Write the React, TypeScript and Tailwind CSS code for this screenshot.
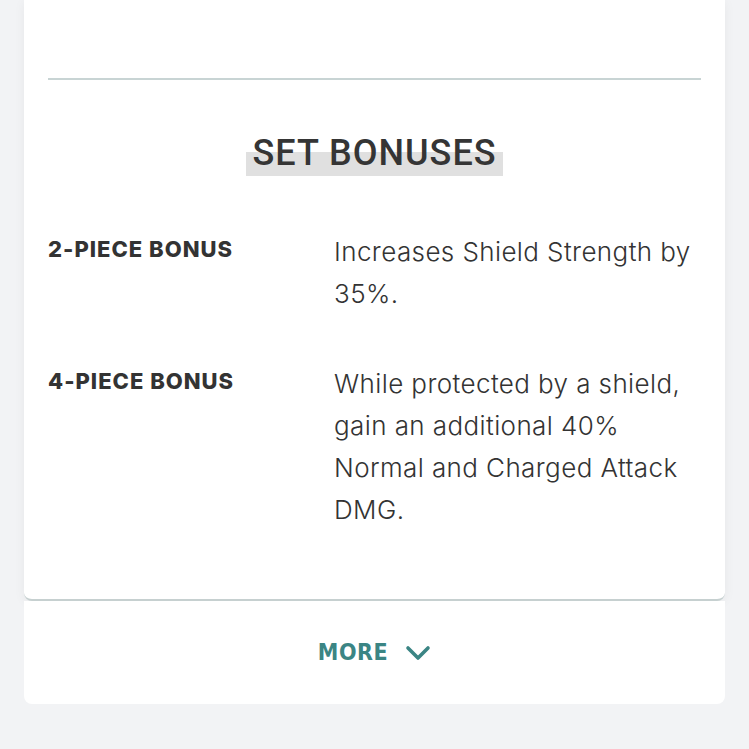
import React from "react";

const bonuses = [
  { label: "2-PIECE BONUS", text: "Increases Shield Strength by 35%." },
  {
    label: "4-PIECE BONUS",
    text: "While protected by a shield, gain an additional 40% Normal and Charged Attack DMG.",
  },
];

function ChevronDown() {
  return (
    <svg width="26" height="18" viewBox="0 0 26 18" fill="none" className="ml-[17px]">
      <path d="M3 4 L13 14 L23 4" stroke="currentColor" strokeWidth="3.6" strokeLinecap="round" strokeLinejoin="round" />
    </svg>
  );
}

export default function App() {
  return (
    <div className="min-h-[749px] bg-[#f2f3f5] px-[24px] pb-[46px] font-['Inter',sans-serif] text-[#333]">
      {/* Set bonuses card (top is scrolled off) */}
      <div className="rounded-b-[8px] border-b-[2px] border-[#c6d0d0] bg-white px-[24px] pt-[78px] pb-[68px] shadow-[0_2px_12px_rgba(0,0,0,0.05)]">
        <div className="h-[2px] bg-[#c8d4d4]" />

        <div className="mt-[51px] flex justify-center">
          <h2 className="relative px-[6px] font-['Roboto',sans-serif] text-[36px] leading-[44px] font-medium tracking-[1px] text-[#353535]">
            <span className="absolute inset-x-0 top-[21px] bottom-[-1px] bg-[#e0e0e0]" />
            <span className="relative">SET BONUSES</span>
          </h2>
        </div>

        <div className="mt-[56px] flex flex-col gap-[48px]">
          {bonuses.map((b) => (
            <div key={b.label} className="flex">
              <div className="w-[286px] shrink-0 pt-[4px] text-[22px] leading-[28px] font-extrabold tracking-[1px] text-[#333]">
                {b.label}
              </div>
              <p className="text-[26px] leading-[42px] font-light tracking-[0.4px] text-[#333]">{b.text}</p>
            </div>
          ))}
        </div>
      </div>

      {/* More toggle */}
      <button className="flex h-[103px] w-full items-center justify-center rounded-b-[8px] bg-white text-[#3b8584]">
        <span className="font-['DejaVu_Sans_Condensed','DejaVu_Sans',sans-serif] text-[23px] font-bold tracking-[0.5px]">
          MORE
        </span>
        <ChevronDown />
      </button>
    </div>
  );
}
